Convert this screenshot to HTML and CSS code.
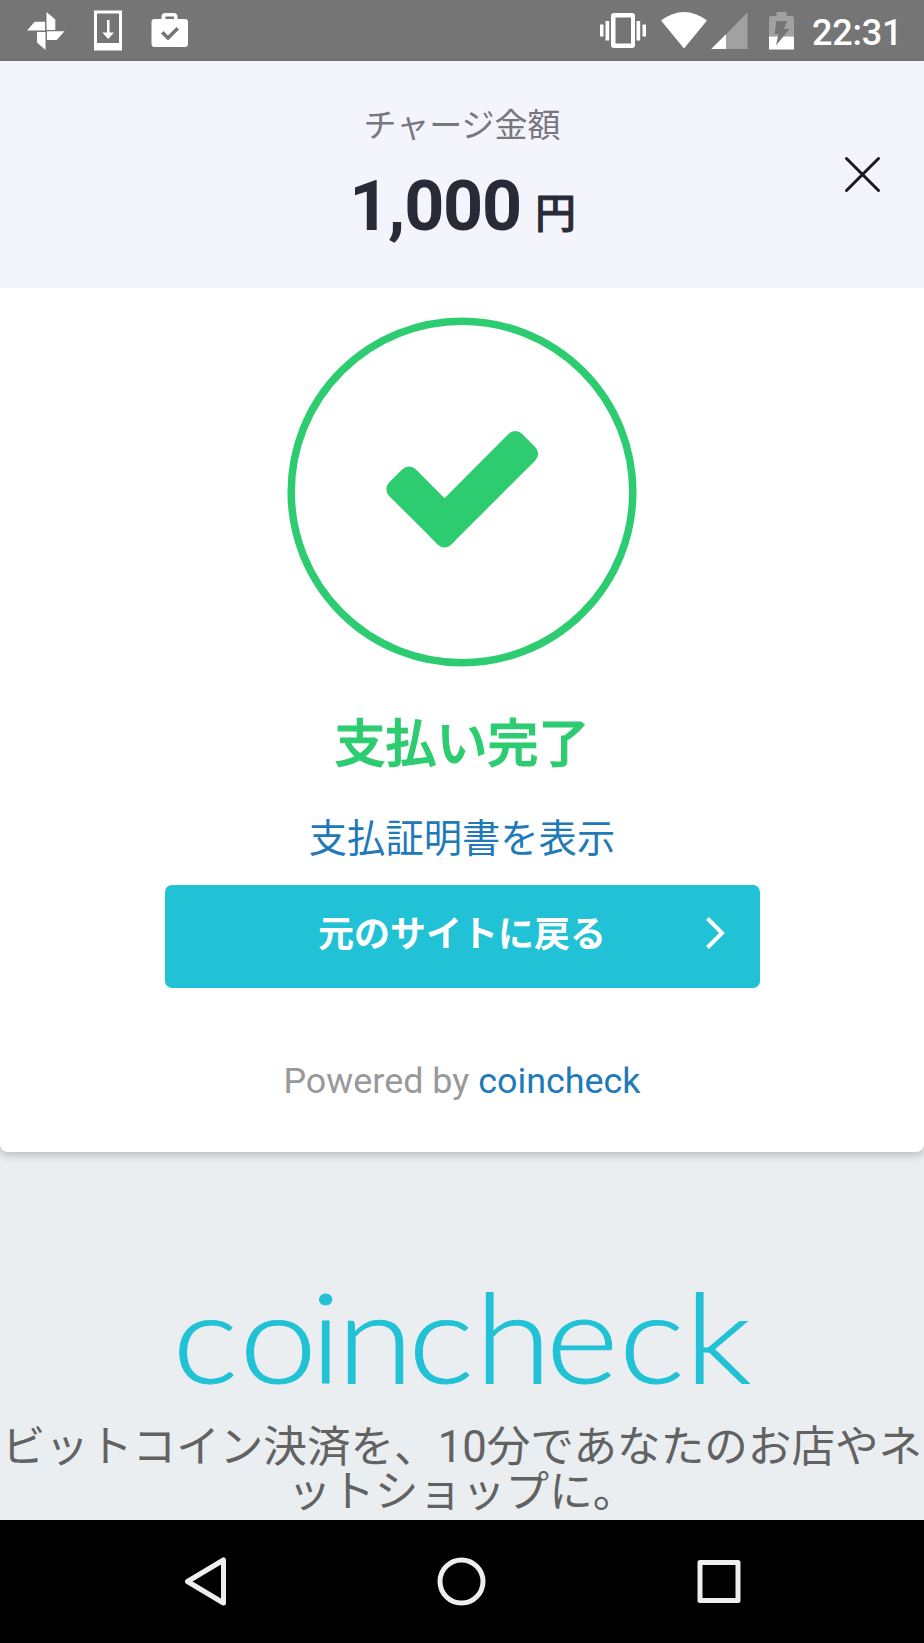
FILE: index.html
```html
<!DOCTYPE html>
<html lang="ja">
<head>
<meta charset="utf-8">
<title>coincheck</title>
<link rel="stylesheet" href="styles.css">
</head>
<body>
<div class="screen">
  <header class="statusbar">
    <svg class="notifications" width="240" height="61" viewBox="0 0 240 61" fill="#fff">
      <path d="M46.5 12l8.8 7.5V30h-8.8zM64.5 31.200l-7.700 8.800H47v-8.800zM45.500 50l-8.500-7.500V32h8.500zM27 30.500l7.700-8.700H45v8.700z"/>
      <path fill-rule="evenodd" d="M94 10.500h28v40H94zM97 13.500v29.500h22V13.500z"/>
      <path d="M107 20h2.500v12.500h4.500l-5.800 6.500-5.800-6.500h4.600z"/>
      <path fill-rule="evenodd" d="M161.500 19v-2q0-4 4-4h8q4 0 4 4v2h7.500q3 0 3 3v21.500q0 3.500-3 3.500h-30.500q-3 0-3-3.500V22q0-3 3-3zM165.500 19h8.500v-2.500h-8.500zM163.500 31l-2.500 2.500 7 7 11-11-2.500-2.500-8.500 8.500z"/>
    </svg>
    <div class="system">
      <svg width="204" height="61" viewBox="594 0 204 61" fill="#fff">
        <path fill-rule="evenodd" d="M614 13h18q3 0 3 3v29q0 3-3 3h-18q-3 0-3-3V16q0-3 3-3zM615.500 17.500v26h15.500v-26z"/>
        <path d="M600 24.500h3.500v12H600zM605.500 21h3.700v19.500h-3.700zM636.500 21h3.700v19.500h-3.700zM642.500 24.500h3.500v12h-3.500z"/>
        <path d="M661 20.500q23-17 46 0L684 48.500z"/>
        <path fill="#a1a1a1" d="M747.500 12.500V49h-36z"/>
        <path d="M726 34.200V49h-14.800z"/>
        <path fill="#a1a1a1" d="M769 36.500V18q0-2 2-2h5.500v-4h10v4h5.500q2 0 2 2v18.500z"/>
        <path d="M769 36.500h25V49.500h-25z"/>
        <path fill="#757575" d="M776.500 21h10.500l-3 8h5.500l-13.500 16.500 2.500-11.500h-4z"/>
      </svg>
      <span class="clock">22:31</span>
    </div>
  </header>
  <main class="page">
    <section class="card">
      <div class="summary">
        <p class="summary-label">チャージ金額</p>
        <p class="summary-amount">1,000<span class="yen">円</span></p>
        <button class="close" aria-label="閉じる">
          <svg width="37" height="37" viewBox="0 0 37 37" fill="none" stroke="#18191f" stroke-width="3" stroke-linecap="round"><path d="M2.500 2.500l32 32M34.500 2.500l-32 32"/></svg>
        </button>
      </div>
      <div class="result">
        <svg class="result-icon" width="350" height="350" viewBox="287 317 350 350">
          <circle cx="462" cy="492" r="170.800" fill="none" stroke="#2ecc71" stroke-width="7.500"/>
          <path fill="#2ecc71" transform="translate(374.500 398.400) scale(.0979)" d="M1671 566q0 40-28 68l-724 724-136 136q-28 28-68 28t-68-28l-136-136-362-362q-28-28-28-68t28-68l136-136q28-28 68-28t68 28l294 295 656-657q28-28 68-28t68 28l136 136q28 28 28 68z"/>
        </svg>
        <h1 class="result-title">支払い完了</h1>
        <a class="receipt">支払証明書を表示</a>
        <a class="return-button"><span>元のサイトに戻る</span>
          <svg class="chevron" width="22" height="34" viewBox="0 0 22 34" fill="none" stroke="#fff" stroke-width="4"><path d="M2.500 2.500L17 17 2.500 31.500"/></svg>
        </a>
        <p class="powered">Powered by <a>coincheck</a></p>
      </div>
    </section>
    <footer class="brand">
      <svg class="logo" width="924" height="110" viewBox="0 1280 924 110">
        <text transform="scale(1.12 1)" y="1383" x="154 213.800 277 301 364.600 424.200 487.400 552.600 611.700">coincheck</text>
      </svg>
      <p class="tagline">ビットコイン決済を、10分であなたのお店やネ<br>ットショップに。</p>
    </footer>
  </main>
  <nav class="navbar">
    <svg width="924" height="123" viewBox="0 1520 924 123" fill="none" stroke="#eee" stroke-width="5" stroke-linejoin="round">
      <path d="M187.500 1581.500l36-21.500v43z"/>
      <circle cx="461.500" cy="1581.500" r="21.500"/>
      <path d="M700 1562.500h38v38h-38z"/>
    </svg>
  </nav>
</div>
</body>
</html>
```
FILE: styles.css
```css
* { box-sizing: border-box; }
body { margin: 0; font-family: Roboto, "Noto Sans CJK JP", sans-serif; }
p, h1 { margin: 0; }
svg { display: block; overflow: visible; }
.screen { width: 924px; height: 1643px; display: flex; flex-direction: column; overflow: hidden; }
.statusbar { height: 61px; flex: none; background: #757575; display: flex; justify-content: space-between; }
.system { display: flex; width: 330px; }
.clock { margin-left: 14px; color: #fff; font-size: 36px; font-weight: 500; line-height: 66px; letter-spacing: -.2px; }
.page { flex: 1; background: #eaeef0; display: flex; flex-direction: column; }
.card { height: 1091px; flex: none; background: #fff; border-radius: 0 0 8px 8px; box-shadow: 0 3px 10px rgba(0, 0, 0, .22); }
.summary { position: relative; height: 227px; padding-top: 41px; background: #f4f4fd; text-align: center; }
.summary-label { font-size: 33px; line-height: 48px; color: #77777d; }
.summary-amount { font-size: 70px; line-height: 82px; margin-top: 15px; font-weight: 700; color: #282a35; letter-spacing: -1.200px; }
.yen { font-size: 41px; font-weight: 500; -webkit-text-stroke: .8px #282a35; margin-left: 14px; line-height: 40px; position: relative; top: -2px; }
.close { position: absolute; right: 43px; top: 95px; padding: 0; border: 0; background: none; }
.result { display: flex; flex-direction: column; align-items: center; padding-top: 29px; }
.result-title { margin-top: 41px; font-size: 51px; line-height: 74px; font-weight: 500; -webkit-text-stroke: 1.200px #2ecc71; color: #2ecc71; }
.receipt { margin-top: 29px; font-size: 38.300px; line-height: 56px; color: #207ab8; }
.return-button { position: relative; margin-top: 18px; width: 595px; height: 102.500px; border-radius: 7px; background: #21c1d6; color: #fff; font-size: 36px; font-weight: 700; line-height: 100px; text-align: center; }
.chevron { position: absolute; right: 33px; top: 31px; }
.powered { margin-top: 71px; font-size: 35.900px; line-height: 44px; color: #999; }
.powered a { color: #207ab8; }
.brand { padding-top: 128px; }
.logo text { font-family: Lato, sans-serif; font-size: 124px; font-weight: 300; fill: #21c1d6; stroke: #21c1d6; stroke-width: .9px; }
.tagline { margin-top: 36px; font-size: 43.600px; line-height: 44.500px; color: #626262; text-align: center; white-space: nowrap; }
.navbar { height: 123px; flex: none; background: #000; }
```
